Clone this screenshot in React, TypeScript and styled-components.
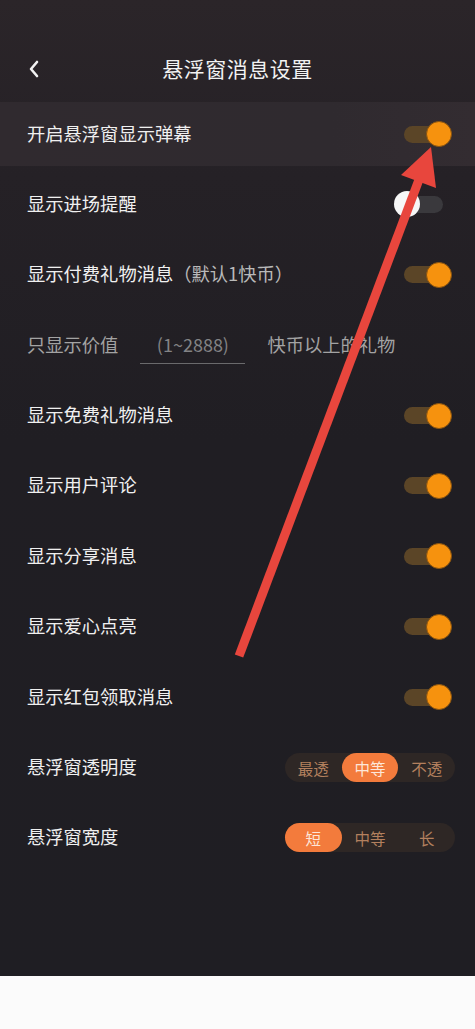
import React from 'react';
import styled, { createGlobalStyle } from 'styled-components';

const GlobalStyle = createGlobalStyle`
  html, body {
    margin: 0;
    padding: 0;
    background: #fbfbfb;
  }
  body {
    font-family: "Noto Sans CJK SC", "Noto Sans", sans-serif;
  }
`;

const Page = styled.div`
  width: 475px;
  height: 1029px;
  display: flex;
  flex-direction: column;
  overflow: hidden;
`;

const Screen = styled.div`
  position: relative;
  height: 976px;
  flex: none;
  background: linear-gradient(180deg, #2b2529 0%, #252126 18%, #201e23 45%, #1f1e23 100%);
  display: flex;
  flex-direction: column;
`;

const StatusSpace = styled.div`
  height: 42px;
`;

const Header = styled.div`
  height: 52px;
  margin-bottom: 8px;
  display: flex;
  align-items: center;
  justify-content: center;
  position: relative;
`;

const BackButton = styled.div`
  position: absolute;
  left: 24px;
  top: 17px;
  width: 20px;
  height: 20px;
  display: flex;
  align-items: center;
  justify-content: center;
`;

const Title = styled.div`
  color: #f2f2f2;
  font-size: 21px;
  letter-spacing: 0.5px;
`;

const List = styled.div`
  display: flex;
  flex-direction: column;
  gap: 6.4px;
`;

const Row = styled.div<{ $active?: boolean }>`
  height: 64px;
  padding: 0 23px 0 27px;
  display: flex;
  align-items: center;
  justify-content: space-between;
  background: ${(p) => (p.$active ? 'linear-gradient(90deg, #302a2f 0%, #2f2a2f 70%, #332c31 100%)' : 'transparent')};
`;

const Label = styled.div<{ $muted?: boolean }>`
  color: ${(p) => (p.$muted ? '#a3a3a3' : '#f0f0f0')};
  font-size: 18.3px;
  white-space: nowrap;
  margin-top: -3px;
`;

const Note = styled.span`
  color: #b9b9b9;
`;

const InputRow = styled.div`
  height: 64px;
  padding: 0 27px;
  display: flex;
  align-items: center;
`;

const ValueInput = styled.div`
  margin-left: 22px;
  width: 105px;
  height: 36px;
  border-bottom: 1.5px solid #6a6a6c;
  display: flex;
  align-items: center;
  justify-content: center;
  color: #838385;
  font-size: 18px;
  margin-top: 2px;
  box-sizing: border-box;
  padding-bottom: 4px;
`;

const InputSuffix = styled(Label)`
  margin-left: 22px;
  color: #a3a3a3;
`;

const ToggleBox = styled.div`
  position: relative;
  width: 58px;
  height: 26px;
`;

const Track = styled.div<{ $on: boolean }>`
  position: absolute;
  left: 10px;
  top: 4.5px;
  width: ${(p) => (p.$on ? '40px' : '39px')};
  height: 17px;
  border-radius: 9px;
  background: ${(p) => (p.$on ? '#5b4527' : '#3a393d')};
`;

const Knob = styled.div<{ $on: boolean }>`
  position: absolute;
  top: 0;
  left: ${(p) => (p.$on ? '32px' : '0')};
  width: 26px;
  height: 26px;
  border-radius: 50%;
  box-sizing: border-box;
  background: ${(p) => (p.$on ? '#f6920e' : '#f7f7f7')};
  border: ${(p) => (p.$on ? '1px solid #8a5410' : 'none')};
`;

const Segmented = styled.div`
  width: 170px;
  height: 29px;
  border-radius: 15px;
  background: #2e2725;
  display: grid;
  grid-template-columns: repeat(3, 1fr);
  margin-right: -3px;
`;

const Segment = styled.div<{ $active?: boolean }>`
  border-radius: 15px;
  display: flex;
  align-items: center;
  justify-content: center;
  font-size: 15.5px;
  color: ${(p) => (p.$active ? '#fde6d8' : '#b3805e')};
  background: ${(p) => (p.$active ? '#f37b3c' : 'transparent')};
`;

const BottomArea = styled.div`
  flex: 1;
  background: #fbfbfb;
`;

const ArrowLayer = styled.svg`
  position: absolute;
  left: 0;
  top: 0;
  width: 475px;
  height: 976px;
  pointer-events: none;
`;

const Toggle = ({ on }: { on: boolean }) => (
  <ToggleBox>
    <Track $on={on} />
    <Knob $on={on} />
  </ToggleBox>
);

const Options = ({ items, active }: { items: string[]; active: number }) => (
  <Segmented>
    {items.map((t, i) => (
      <Segment key={t} $active={i === active}>
        {t}
      </Segment>
    ))}
  </Segmented>
);

const toggles: { label: string; on: boolean }[] = [
  { label: '显示免费礼物消息', on: true },
  { label: '显示用户评论', on: true },
  { label: '显示分享消息', on: true },
  { label: '显示爱心点亮', on: true },
  { label: '显示红包领取消息', on: true },
];

export default function App() {
  return (
    <>
      <GlobalStyle />
      <Page>
        <Screen>
          <StatusSpace />
          <Header>
            <BackButton>
              <svg width="14" height="18" viewBox="0 0 14 18">
                <polyline points="10,2 4,9 10,16" fill="none" stroke="#f2f2f2" strokeWidth="2.6" strokeLinecap="round" strokeLinejoin="round" />
              </svg>
            </BackButton>
            <Title>悬浮窗消息设置</Title>
          </Header>
          <List>
            <Row $active>
              <Label>开启悬浮窗显示弹幕</Label>
              <Toggle on />
            </Row>
            <Row>
              <Label>显示进场提醒</Label>
              <Toggle on={false} />
            </Row>
            <Row>
              <Label>
                显示付费礼物消息<Note>（默认1快币）</Note>
              </Label>
              <Toggle on />
            </Row>
            <InputRow>
              <Label $muted>只显示价值</Label>
              <ValueInput>(1~2888)</ValueInput>
              <InputSuffix>快币以上的礼物</InputSuffix>
            </InputRow>
            {toggles.map((t) => (
              <Row key={t.label}>
                <Label>{t.label}</Label>
                <Toggle on={t.on} />
              </Row>
            ))}
            <Row>
              <Label>悬浮窗透明度</Label>
              <Options items={['最透', '中等', '不透']} active={1} />
            </Row>
            <Row>
              <Label>悬浮窗宽度</Label>
              <Options items={['短', '中等', '长']} active={0} />
            </Row>
          </List>
          <ArrowLayer viewBox="0 0 475 976">
            <line x1="239" y1="656" x2="420" y2="177" stroke="#e8463d" strokeWidth="9" />
            <polygon points="431,147 436,188 401,175" fill="#e8463d" />
          </ArrowLayer>
        </Screen>
        <BottomArea />
      </Page>
    </>
  );
}
